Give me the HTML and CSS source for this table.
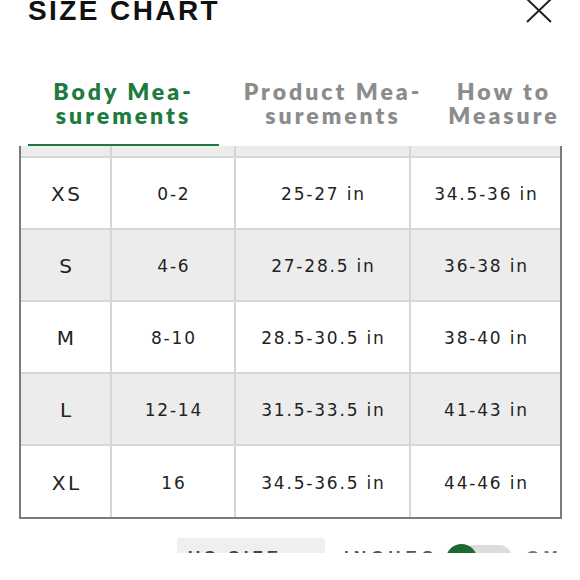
FILE: index.html
```html
<!DOCTYPE html>
<html lang="en">
<head>
<meta charset="utf-8">
<title>Size Chart</title>
<link rel="stylesheet" href="styles.css">
</head>
<body>
<div class="sheet">
  <header class="head">
    <h1 class="title">SIZE CHART</h1>
    <button class="close" aria-label="Close">
      <svg width="26" height="24" viewBox="0 0 26 24"><path d="M1 0 L25 23 M25 0 L1 23" stroke="#222" stroke-width="2" fill="none"/></svg>
    </button>
  </header>
  <nav class="tabs">
    <div class="tab tab-1 active">Body Mea-<br>surements</div>
    <div class="tab tab-2">Product Mea-<br>surements</div>
    <div class="tab tab-3">How to<br>Measure</div>
  </nav>
  <div class="chart">
    <div class="hcell"></div><div class="hcell"></div><div class="hcell"></div><div class="hcell"></div>
    <div class="cell size">XS</div><div class="cell">0-2</div><div class="cell">25-27 in</div><div class="cell">34.5-36 in</div>
    <div class="cell size alt">S</div><div class="cell alt">4-6</div><div class="cell alt">27-28.5 in</div><div class="cell alt">36-38 in</div>
    <div class="cell size">M</div><div class="cell">8-10</div><div class="cell">28.5-30.5 in</div><div class="cell">38-40 in</div>
    <div class="cell size alt">L</div><div class="cell alt">12-14</div><div class="cell alt">31.5-33.5 in</div><div class="cell alt">41-43 in</div>
    <div class="cell size last">XL</div><div class="cell last">16</div><div class="cell last">34.5-36.5 in</div><div class="cell last">44-46 in</div>
  </div>
  <div class="controls">
    <div class="us-size">US SIZE</div>
    <span class="unit">INCHES</span>
    <span class="toggle"><span class="knob"></span></span>
    <span class="unit cm">CM</span>
  </div>
</div>
</body>
</html>
```
FILE: styles.css
```css
html, body {
  margin: 0;
  padding: 0;
  background: #fff;
}
.sheet {
  width: 580px;
  height: 553px;
  overflow: hidden;
  font-family: "Liberation Sans", Arial, sans-serif;
  color: #222;
}
.head {
  display: flex;
  justify-content: space-between;
  align-items: flex-start;
  padding: 0 28px 0 28px;
  height: 30px;
}
.title {
  margin: -3px 0 0 0;
  font-size: 28px;
  line-height: 28px;
  font-weight: 700;
  letter-spacing: 2.4px;
  color: #111;
}
.close {
  border: 0;
  background: none;
  padding: 0;
  margin: -1px 0 0 0;
  width: 26px;
  height: 24px;
}
.close svg { display: block; }
.tabs {
  display: flex;
  margin-top: 45px;
  padding-left: 28px;
  height: 71px;
}
.tab {
  font-family: Lato, "Liberation Sans", sans-serif;
  font-weight: 800;
  font-size: 23px;
  line-height: 24px;
  letter-spacing: 3px;
  text-align: center;
  color: #8c8c8c;
  box-sizing: border-box;
  padding-top: 4px;
  white-space: nowrap;
}
.tab-1 { width: 191px; }
.tab-2 { width: 228px; }
.tab-3 { width: 114px; }
.tab.active {
  color: #1d7b3f;
  border-bottom: 2px solid #1f7a41;
}
.chart {
  margin: 0 0 0 19px;
  width: 543px;
  box-sizing: border-box;
  display: grid;
  grid-template-columns: 89px 122px 173px 149px;
  grid-template-rows: 10px 70px 70px 70px 70px 71px;
  gap: 2px;
  background: #d6d6d6;
  border-left: 2px solid #7b7b7b;
  border-right: 2px solid #7b7b7b;
  border-bottom: 2px solid #7b7b7b;
}
.hcell { background: #ececec; }
.cell {
  background: #fff;
  display: flex;
  align-items: center;
  justify-content: center;
  font-family: "DejaVu Sans", sans-serif;
  font-size: 17px;
  letter-spacing: 1.8px;
  padding-left: 1.8px;
  padding-top: 2px;
  color: #222;
}
.cell.alt { background: #ececec; }
.cell.size {
  font-size: 20px;
  letter-spacing: 2.5px;
  padding-left: 2.5px;
}
.controls {
  display: flex;
  align-items: flex-start;
  margin-top: 19px;
  padding-left: 177px;
}
.us-size {
  width: 148px;
  height: 40px;
  box-sizing: border-box;
  background: #efefef;
  border-radius: 3px;
  padding: 10px 0 0 11px;
  font-size: 17px;
  font-weight: 700;
  letter-spacing: 4px;
  color: #444;
}
.unit {
  margin: 10px 0 0 19px;
  font-size: 17px;
  font-weight: 700;
  letter-spacing: 5px;
  color: #555;
}
.toggle {
  position: relative;
  margin: 7px 0 0 8px;
  width: 66px;
  height: 28px;
}
.toggle::before {
  content: "";
  position: absolute;
  left: 14px;
  right: 0;
  top: 0;
  height: 26px;
  border-radius: 13px;
  background: #dcdcdc;
}
.knob {
  position: absolute;
  left: 0;
  top: -1px;
  width: 31px;
  height: 31px;
  border-radius: 50%;
  background: #1c6a2f;
}
.unit.cm { margin-left: 14px; color: #777; }
```
